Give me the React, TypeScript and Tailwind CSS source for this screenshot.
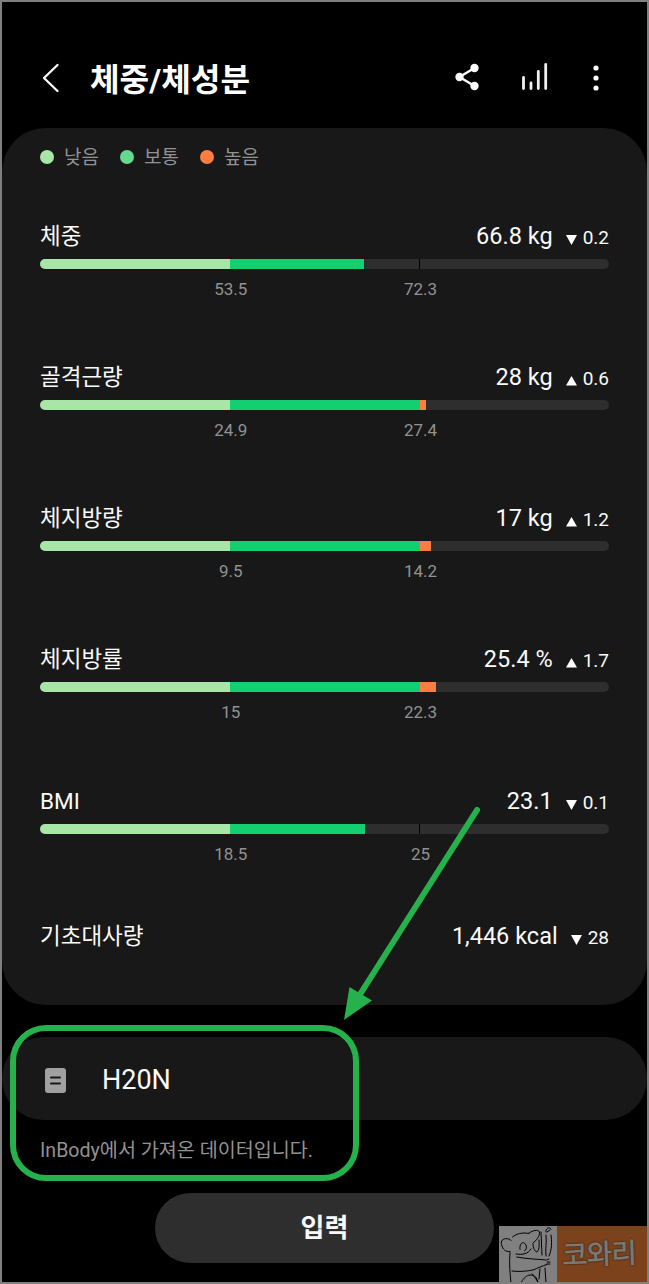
import React from "react";

type Metric = {
  name: string;
  value: string;
  delta: string;
  up: boolean;
  low: string;
  high: string;
  normalWidth: number;
  highWidth: number;
};

const metrics: Metric[] = [
  { name: "체중", value: "66.8 kg", delta: "0.2", up: false, low: "53.5", high: "72.3", normalWidth: 134, highWidth: 0 },
  { name: "골격근량", value: "28 kg", delta: "0.6", up: true, low: "24.9", high: "27.4", normalWidth: 190, highWidth: 6 },
  { name: "체지방량", value: "17 kg", delta: "1.2", up: true, low: "9.5", high: "14.2", normalWidth: 190, highWidth: 11 },
  { name: "체지방률", value: "25.4 %", delta: "1.7", up: true, low: "15", high: "22.3", normalWidth: 190, highWidth: 16 },
  { name: "BMI", value: "23.1", delta: "0.1", up: false, low: "18.5", high: "25", normalWidth: 134.5, highWidth: 0 },
];

const legend = [
  { label: "낮음", color: "bg-[#a8e6a8]" },
  { label: "보통", color: "bg-[#65d992]" },
  { label: "높음", color: "bg-[#ff7d40]" },
];

const Triangle = ({ up }: { up: boolean }) => (
  <svg width="11" height="10" viewBox="0 0 11 10" fill="#fff" className="mr-[6px] translate-y-px">
    {up ? <path d="M0 9.500L5.5 0L11 9.500Z" /> : <path d="M0 0L11 0L5.5 10Z" />}
  </svg>
);

const Heading = ({ name, value, delta, up }: { name: string; value: string; delta: string; up: boolean }) => (
  <div className="flex h-8 items-baseline text-[#fafafa]">
    <span className="text-[22.5px] leading-8">{name}</span>
    <span className="ml-auto text-[23.5px] leading-8">{value}</span>
    <span className="ml-[13px] flex items-baseline text-[19px] leading-8">
      <Triangle up={up} />
      {delta}
    </span>
  </div>
);

const MetricRow = ({ metric }: { metric: Metric }) => (
  <div className="h-[141.15px]">
    <Heading name={metric.name} value={metric.value} delta={metric.delta} up={metric.up} />
    <div className="relative mt-[7px] flex h-[10px] overflow-hidden rounded-full bg-[#2e2e2e]">
      <div className="w-[190px] bg-[#a8e6a8]"></div>
      <div className="bg-[#14cf70]" style={{ width: metric.normalWidth }}></div>
      <div className="bg-[#ff7d40]" style={{ width: metric.highWidth }}></div>
      {metric.highWidth === 0 && <div className="absolute left-[379px] h-full w-px bg-black"></div>}
    </div>
    <div className="mt-[9px] grid grid-cols-3 text-[17px] leading-[22px] text-[#929292]">
      <span className="col-start-1 -mr-[97px] ml-[95px] text-center">{metric.low}</span>
      <span className="col-start-2 -mr-[97px] ml-[95px] text-center">{metric.high}</span>
    </div>
  </div>
);

const Watermark = () => (
  <div className="absolute -bottom-[2px] -right-[2px] flex h-[58px] w-[150px] opacity-50">
    <div className="w-[58px] bg-white">
      <svg width="58" height="58" viewBox="0 0 58 58" fill="none" stroke="#000" strokeWidth="1" strokeLinecap="round">
        <path d="M11 25.500C6 26 4 23 3 20C1 16 3 13 6.500 12.700C9 12.500 11 13 12 14.500M13.500 11C17 8 23 6 30 7.500M30 7C34 4.500 39 3 40.500 6C41 10 37 15 34 17" />
        <path d="M11 26.500C10 37 11 48 12 57M17.700 31C27 33 38 33 47 34M13 45C22 46 28 45 34 44C39 42 43 40 48 38.500" />
        <path d="M21 23.500C20 18 24 14 27 19C28 22 27 24 25.500 25" />
        <path d="M17 28C24 29 29 28 32 23M34 18C34 22 36 26 38 26C41 23 40 17 40 14" />
        <path d="M42 6L43 29M47 9C48 15 46 24 47 30M52 9C53 15 53 24 50 30M41 43L40 53M46 42L47 57" />
        <path d="M47 6C46 3 50 0 52 3M48 6L51 4M48 34L50 33M48 36L51 36M48 38L51 38" />
        <path d="M22 57C25 50 34 43 39 57M33 48C36 50 38 52 39 56" />
      </svg>
    </div>
    <div className="flex flex-1 items-center bg-[#f88336] pl-[5px]">
      <span className="-rotate-2 text-[28px] font-medium leading-none tracking-[-1.2px] text-[#f6efe4] [text-shadow:0_0_2px_#222]">
        코와리
      </span>
    </div>
  </div>
);

export default function App() {
  return (
    <div className="relative h-[1284px] w-[649px] overflow-hidden border-2 border-[#808080] bg-black font-[Roboto,'Noto_Sans_CJK_KR',sans-serif]">
      {/* Header */}
      <header className="flex h-[126px] items-center pl-[40px] pr-[48px] pt-[26px] text-white">
        <svg width="18" height="30" viewBox="0 0 18 30" fill="none" stroke="#fafafa" strokeWidth="2.3" strokeLinecap="round" strokeLinejoin="round">
          <path d="M15.5 2L2 15L15.5 28" />
        </svg>
        <h1 className="ml-[30px] mt-1 text-[32.2px] font-bold leading-10">체중/체성분</h1>
        <svg width="24" height="28" viewBox="0 0 24 28" fill="#fafafa" stroke="#fafafa" className="-mt-[2px] ml-auto">
          <path d="M19.5 5L4.5 14L19.5 23" fill="none" strokeWidth="2.4" />
          <circle cx="4.5" cy="14" r="4.2" stroke="none" />
          <circle cx="19.5" cy="5" r="4.2" stroke="none" />
          <circle cx="19.5" cy="23" r="4.2" stroke="none" />
        </svg>
        <svg width="28" height="30" viewBox="0 0 28 30" stroke="#f0f0f0" strokeWidth="2.8" strokeLinecap="round" className="-mt-[2px] ml-[42px]">
          <path d="M2.5 15.5V26.5M10 21V26.5M17.3 9.500V26.5M24.7 2.500V26.5" />
        </svg>
        <svg width="6" height="26" viewBox="0 0 6 26" fill="#fafafa" className="ml-[44px]">
          <circle cx="3" cy="3" r="2.6" />
          <circle cx="3" cy="13" r="2.6" />
          <circle cx="3" cy="23" r="2.6" />
        </svg>
      </header>

      {/* Body composition */}
      <section className="h-[877px] rounded-[44px] bg-[#181818] px-[38px] pt-[16px]">
        <div className="flex h-[26px] gap-[20px] text-[19px] leading-[26px] text-[#929292]">
          {legend.map((item) => (
            <div key={item.label} className="flex w-[60px] items-center">
              <span className={`mr-[10px] size-[14px] shrink-0 rounded-full ${item.color}`}></span>
              <span className="mt-[2px]">{item.label}</span>
            </div>
          ))}
        </div>
        <div className="pt-[50px]">
          {metrics.map((metric) => (
            <MetricRow key={metric.name} metric={metric} />
          ))}
          <div className="-mt-[5.5px]">
            <Heading name="기초대사량" value="1,446 kcal" delta="28" up={false} />
          </div>
        </div>
      </section>

      {/* Device */}
      <section className="mt-[32px] flex h-[83px] items-center rounded-[42px] bg-[#181818] pl-[43px]">
        <svg width="21" height="25" viewBox="0 0 21 25" className="mt-[3px]">
          <rect width="21" height="25" rx="3" fill="#a0a0a0" />
          <path d="M6 9.5H15M6 15.5H15" stroke="#181818" strokeWidth="2" strokeLinecap="round" />
        </svg>
        <span className="ml-[36px] mt-[4px] text-[27px] text-[#fafafa]">H20N</span>
      </section>
      <p className="mt-[17px] pl-[38px] text-[19.6px] leading-[28px] text-[#929292]">InBody에서 가져온 데이터입니다.</p>
      <button className="ml-[153px] mt-[28px] flex h-[70px] w-[339px] items-center justify-center rounded-full bg-[#2e2e2e] pt-px text-[26px] font-bold text-[#fafafa]">
        입력
      </button>

      {/* Callout */}
      <div className="absolute left-[8px] top-[1023px] h-[156px] w-[349px] rounded-[36px] border-[6px] border-[#25b14c]"></div>
      <svg className="absolute left-[338px] top-[798px]" width="150" height="230" viewBox="340 800 150 230">
        <path d="M477 810L359 996" stroke="#25b14c" strokeWidth="6" strokeLinecap="round" />
        <path d="M344 1020L349.500 987L372 1000.500Z" fill="#25b14c" />
      </svg>

      <Watermark />
    </div>
  );
}
